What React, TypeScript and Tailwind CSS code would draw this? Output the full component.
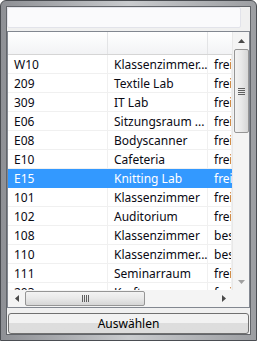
import { FC } from 'react';

interface Room {
  id: string;
  name: string;
  state: string;
}

const rooms: Room[] = [
  { id: 'W10', name: 'Klassenzimmer...', state: 'frei' },
  { id: '209', name: 'Textile Lab', state: 'frei' },
  { id: '309', name: 'IT Lab', state: 'frei' },
  { id: 'E06', name: 'Sitzungsraum ...', state: 'frei' },
  { id: 'E08', name: 'Bodyscanner', state: 'frei' },
  { id: 'E10', name: 'Cafeteria', state: 'frei' },
  { id: 'E15', name: 'Knitting Lab', state: 'frei' },
  { id: '101', name: 'Klassenzimmer', state: 'frei' },
  { id: '102', name: 'Auditorium', state: 'frei' },
  { id: '108', name: 'Klassenzimmer', state: 'bes' },
  { id: '110', name: 'Klassenzimmer...', state: 'bes' },
  { id: '111', name: 'Seminarraum', state: 'frei' },
  { id: '203', name: 'Kraftraum', state: 'frei' },
];

const Row: FC<{ room: Room; selected: boolean }> = ({ room, selected }) => {
  const cell = selected
    ? 'h-[19px] shrink-0 overflow-hidden whitespace-nowrap bg-[#3399ff] pl-[6px] pt-[1px] leading-[18px] text-white'
    : 'h-[19px] shrink-0 overflow-hidden whitespace-nowrap border-b border-r border-[#f0f0f0] pl-[6px] pt-[1px] leading-[17px] text-[#0a0a14]';
  return (
    <div className="flex">
      <div className={`w-[100px] ${cell}`}>{room.id}</div>
      <div className={`w-[100px] ${cell}`}>{room.name}</div>
      <div className={`w-[24px] ${cell}`}>{room.state}</div>
    </div>
  );
};

export default function App() {
  return (
    <div
      className="h-[341px] w-[257px] overflow-hidden rounded-t-[6px] border border-[#4a4d52] bg-gradient-to-r from-[#8e9095] via-[#c9cbce] to-[#9c9ea2] px-[5px] pb-[5px] pt-[5px]"
      style={{ fontFamily: '"Noto Sans", "Open Sans", sans-serif' }}
    >
      <div className="flex h-full flex-col border border-[#62656a] bg-[#f0f0f0] text-[12px]">
        {/* search field */}
        <div className="mr-[9px] h-[22px] rounded-[2px] border border-[#e2e3ea] bg-[#fafafc]" />

        {/* list */}
        <div className="mt-[3px] flex h-[277px] flex-col border border-[#828790] bg-white">
          <div className="flex min-h-0 flex-1">
            <div className="flex min-w-0 flex-1 flex-col overflow-hidden">
              <div className="flex h-[23px] shrink-0 border-b border-[#d5d5d5] bg-gradient-to-b from-white to-[#f2f3f5]">
                <div className="w-[100px] border-r border-[#e3e4e6]" />
                <div className="w-[100px] border-r border-[#e3e4e6]" />
                <div className="flex-1" />
              </div>
              <div className="overflow-hidden">
                {rooms.map((r) => (
                  <Row key={r.id} room={r} selected={r.id === 'E15'} />
                ))}
              </div>
            </div>

            {/* vertical scrollbar */}
            <div className="flex w-[17px] shrink-0 flex-col items-center border-l border-[#e8e8e8] bg-[#f4f4f4]">
              <div className="flex h-[17px] w-full items-center justify-center">
                <svg width="7" height="4" viewBox="0 0 7 4">
                  <path d="M3.5 0 L7 4 L0 4 Z" fill="#4a4a4a" />
                </svg>
              </div>
              <div className="flex h-[84px] w-[15px] items-center justify-center rounded-[2px] border border-[#959595] bg-gradient-to-r from-[#f3f3f3] via-[#e8e8e8] to-[#d6d6d6]">
                <div className="flex flex-col gap-[1px]">
                  <div className="h-[1px] w-[7px] bg-[#5f5f5f]" />
                  <div className="h-[1px] w-[7px] bg-[#5f5f5f]" />
                  <div className="h-[1px] w-[7px] bg-[#5f5f5f]" />
                  <div className="h-[1px] w-[7px] bg-[#5f5f5f]" />
                </div>
              </div>
              <div className="flex-1" />
              <div className="flex h-[17px] w-full items-center justify-center">
                <svg width="7" height="4" viewBox="0 0 7 4">
                  <path d="M0 0 L7 0 L3.5 4 Z" fill="#a0a0a0" />
                </svg>
              </div>
            </div>
          </div>

          {/* horizontal scrollbar */}
          <div className="flex h-[17px] shrink-0 items-center bg-[#f4f4f4]">
            <div className="flex w-[17px] items-center justify-center">
              <svg width="4" height="7" viewBox="0 0 4 7">
                <path d="M4 0 L4 7 L0 3.5 Z" fill="#4a4a4a" />
              </svg>
            </div>
            <div className="flex h-[15px] w-[120px] items-center justify-center gap-[1px] rounded-[2px] border border-[#959595] bg-gradient-to-b from-[#f3f3f3] via-[#e8e8e8] to-[#d6d6d6]">
              <div className="h-[7px] w-[1px] bg-[#5f5f5f]" />
              <div className="h-[7px] w-[1px] bg-[#5f5f5f]" />
              <div className="h-[7px] w-[1px] bg-[#5f5f5f]" />
              <div className="h-[7px] w-[1px] bg-[#5f5f5f]" />
            </div>
            <div className="flex-1" />
            <div className="flex w-[17px] items-center justify-center">
              <svg width="4" height="7" viewBox="0 0 4 7">
                <path d="M0 0 L4 3.5 L0 7 Z" fill="#4a4a4a" />
              </svg>
            </div>
            <div className="w-[17px]" />
          </div>
        </div>

        {/* button */}
        <div className="mt-[5px] px-[1px]">
          <button className="h-[21px] w-full rounded-[3px] border border-[#707070] bg-gradient-to-b from-[#f2f2f2] from-50% to-[#dddddd] to-50% text-[12px] leading-[19px] text-black">
            Auswählen
          </button>
        </div>
      </div>
    </div>
  );
}
